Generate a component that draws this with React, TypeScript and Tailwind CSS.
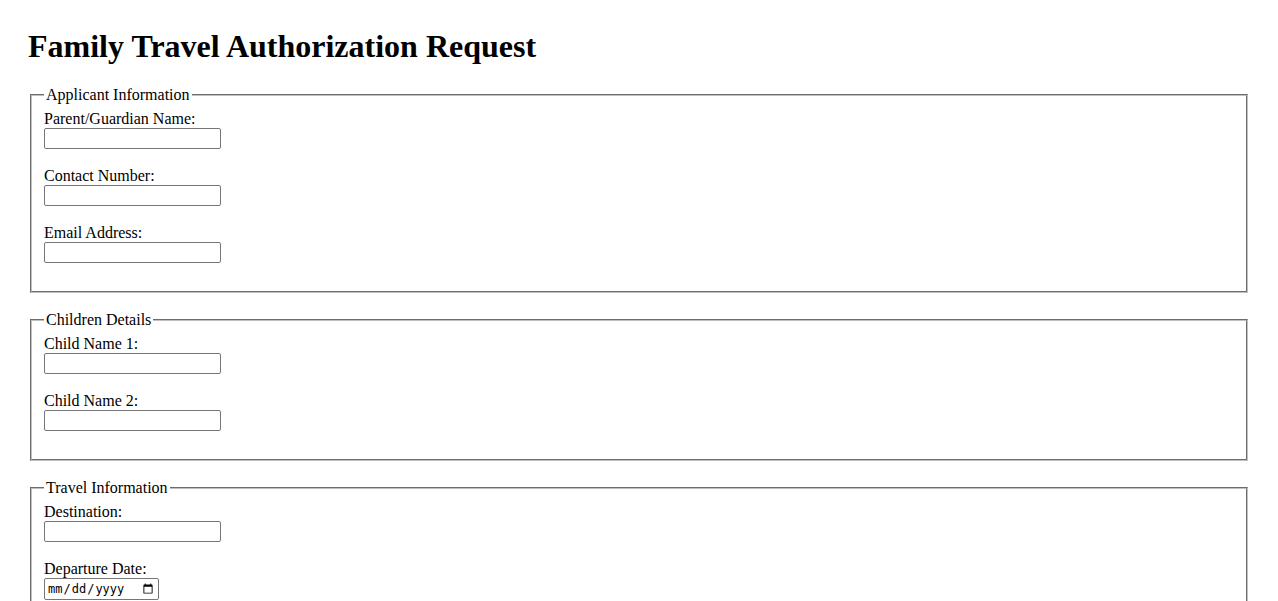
import { FC } from "react";

type Field = { id: string; label: string; type?: string };

const sections: { legend: string; fields: Field[] }[] = [
  {
    legend: "Applicant Information",
    fields: [
      { id: "guardianName", label: "Parent/Guardian Name:" },
      { id: "contactNumber", label: "Contact Number:", type: "tel" },
      { id: "email", label: "Email Address:", type: "email" },
    ],
  },
  {
    legend: "Children Details",
    fields: [
      { id: "child1", label: "Child Name 1:" },
      { id: "child2", label: "Child Name 2:" },
    ],
  },
  {
    legend: "Travel Information",
    fields: [
      { id: "destination", label: "Destination:" },
      { id: "departureDate", label: "Departure Date:", type: "date" },
      { id: "returnDate", label: "Return Date:", type: "date" },
    ],
  },
];

const serif = "font-['Liberation_Serif','Times_New_Roman',serif]";

const FieldRow: FC<{ field: Field }> = ({ field }) => {
  const isDate = field.type === "date";
  return (
    <div className="mb-[18px]">
      <label htmlFor={field.id} className="block h-[18px] leading-[18px] text-[16px]">
        {field.label}
      </label>
      {isDate ? (
        <input
          id={field.id}
          type="date"
          className="block h-[22px] border border-[#767676] rounded-[2px] pl-[2px] pr-[2px] text-[12px] text-black font-['DejaVu_Sans_Mono',monospace]"
        />
      ) : (
        <input
          id={field.id}
          type={field.type ?? "text"}
          className="block w-[177px] h-[21px] border border-[#767676] rounded-[2px] px-[2px] text-[13.33px] font-['Liberation_Sans',Arial,sans-serif]"
        />
      )}
    </div>
  );
};

const App: FC = () => {
  return (
    <div className={`min-h-screen bg-white text-black px-[28px] pt-[28px] ${serif}`}>
      <h1 className="text-[32px] leading-[37px] font-bold mb-[21px]">
        Family Travel Authorization Request
      </h1>
      <form>
        {sections.map((s) => (
          <fieldset
            key={s.legend}
            className="mx-[2px] mb-[18px] border-2 [border-style:groove] border-[#c0c0c0] px-[12px] pt-[6px] pb-[10px]"
          >
            <legend className="px-[2px] text-[16px] leading-[18px]">{s.legend}</legend>
            {s.fields.map((f) => (
              <FieldRow key={f.id} field={f} />
            ))}
          </fieldset>
        ))}
      </form>
    </div>
  );
};

export default App;
